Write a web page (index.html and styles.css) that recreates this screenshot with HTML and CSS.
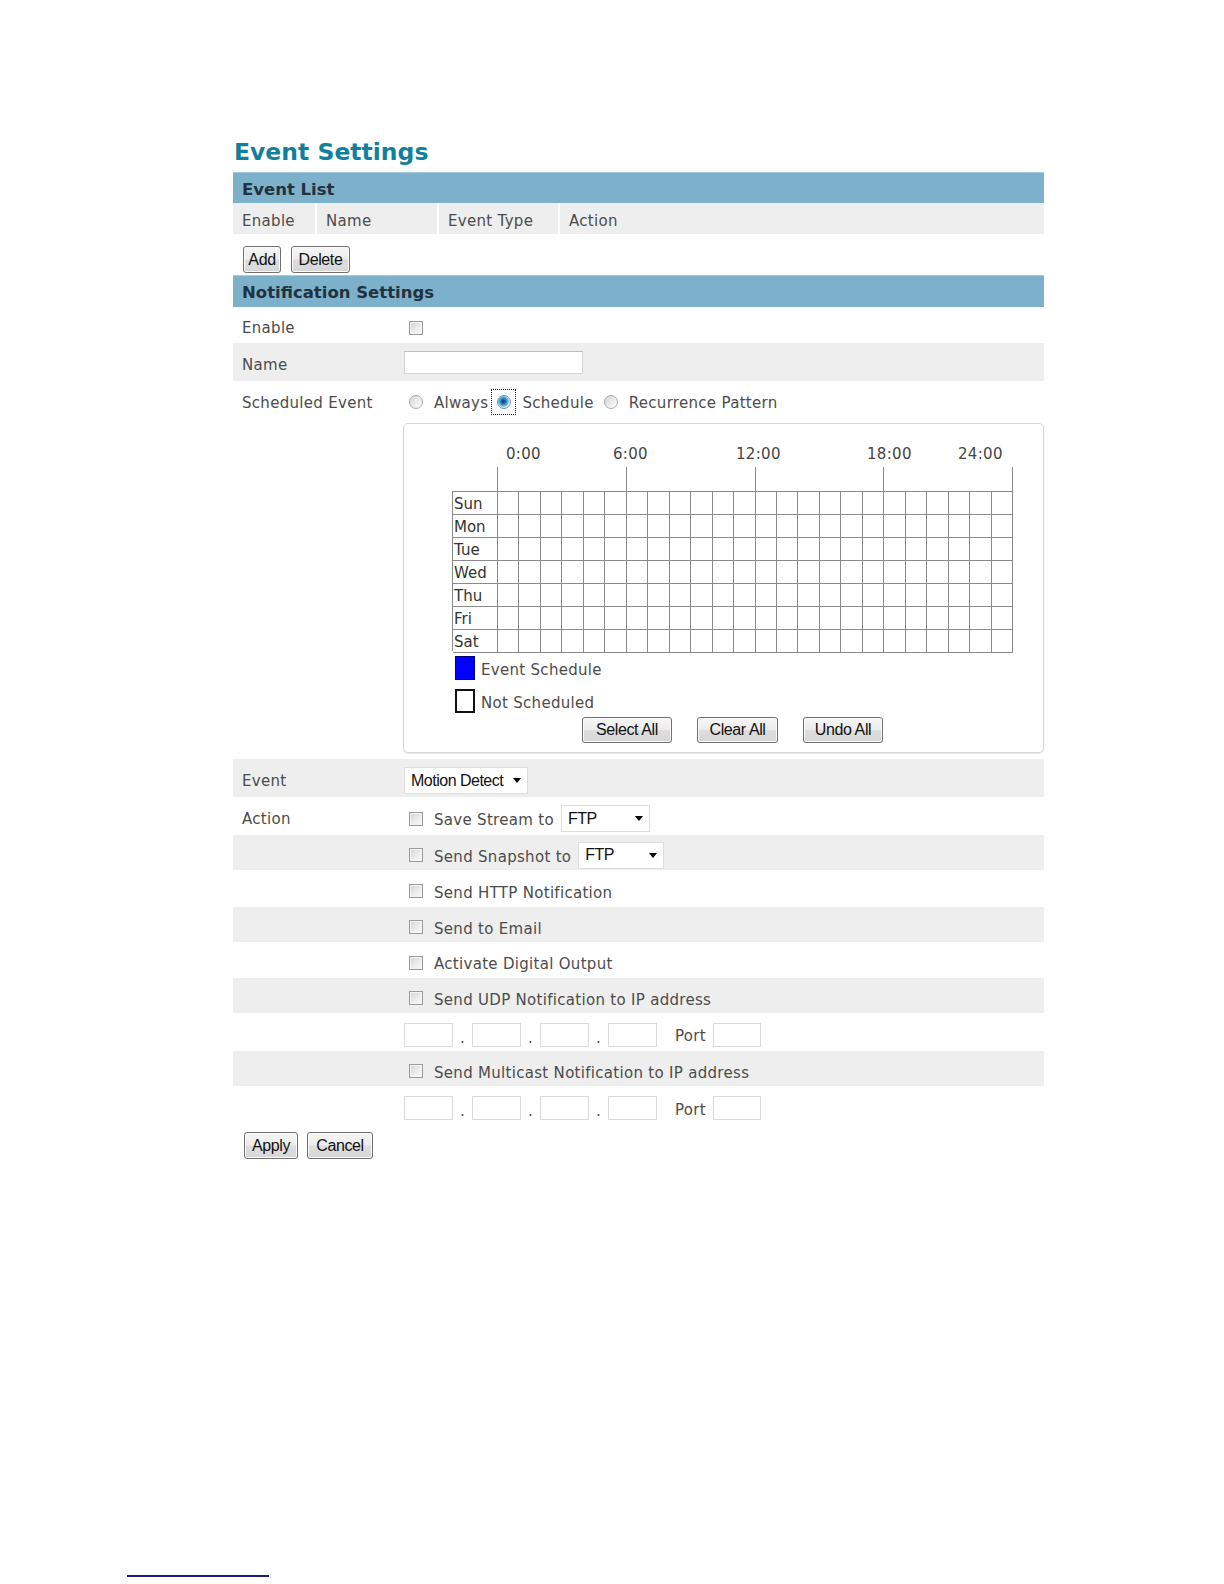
FILE: index.html
```html
<!DOCTYPE html>
<html lang="en">
<head>
<meta charset="utf-8">
<title>Event Settings</title>
<link rel="stylesheet" href="styles.css">
</head>
<body>
<div class="sheet">
  <div class="panel">
    <h1 class="title">Event Settings</h1>

    <div class="sec-head">Event List</div>
    <div class="list-head">
      <div class="lh lh-enable">Enable</div>
      <div class="lh lh-name">Name</div>
      <div class="lh lh-type">Event Type</div>
      <div class="lh lh-action">Action</div>
    </div>
    <div class="list-btns">
      <button class="btn btn-add">Add</button>
      <button class="btn btn-delete">Delete</button>
    </div>

    <div class="sec-head sec-head-notif">Notification Settings</div>

    <div class="row h36">
      <div class="label">Enable</div>
      <div class="value"><input type="checkbox" class="cb"></div>
    </div>

    <div class="row alt h38">
      <div class="label">Name</div>
      <div class="value"><input type="text" class="text-input"></div>
    </div>

    <div class="row row-sched">
      <div class="label label-sched">Scheduled Event</div>
      <div class="value">
        <div class="radios">
          <input type="radio" name="sched" class="rb rb-first">
          <span class="rb-text">Always</span>
          <span class="focus-box"><input type="radio" name="sched" class="rb" checked></span>
          <span class="rb-text rb-text-sched">Schedule</span>
          <input type="radio" name="sched" class="rb rb-third">
          <span class="rb-text">Recurrence Pattern</span>
        </div>
        <div class="sched-box">
          <div class="scale-labels">
            <span class="tl tl-0">0:00</span>
            <span class="tl tl-6">6:00</span>
            <span class="tl tl-12">12:00</span>
            <span class="tl tl-18">18:00</span>
            <span class="tl tl-24">24:00</span>
          </div>
          <div class="ticks"><span></span><span></span><span></span><span></span><span></span></div>
          <div class="sched-grid">
            <span class="day">Sun</span><span></span><span></span><span></span><span></span><span></span><span></span><span></span><span></span><span></span><span></span><span></span><span></span><span></span><span></span><span></span><span></span><span></span><span></span><span></span><span></span><span></span><span></span><span></span><span></span>
            <span class="day">Mon</span><span></span><span></span><span></span><span></span><span></span><span></span><span></span><span></span><span></span><span></span><span></span><span></span><span></span><span></span><span></span><span></span><span></span><span></span><span></span><span></span><span></span><span></span><span></span><span></span>
            <span class="day">Tue</span><span></span><span></span><span></span><span></span><span></span><span></span><span></span><span></span><span></span><span></span><span></span><span></span><span></span><span></span><span></span><span></span><span></span><span></span><span></span><span></span><span></span><span></span><span></span><span></span>
            <span class="day">Wed</span><span></span><span></span><span></span><span></span><span></span><span></span><span></span><span></span><span></span><span></span><span></span><span></span><span></span><span></span><span></span><span></span><span></span><span></span><span></span><span></span><span></span><span></span><span></span><span></span>
            <span class="day">Thu</span><span></span><span></span><span></span><span></span><span></span><span></span><span></span><span></span><span></span><span></span><span></span><span></span><span></span><span></span><span></span><span></span><span></span><span></span><span></span><span></span><span></span><span></span><span></span><span></span>
            <span class="day">Fri</span><span></span><span></span><span></span><span></span><span></span><span></span><span></span><span></span><span></span><span></span><span></span><span></span><span></span><span></span><span></span><span></span><span></span><span></span><span></span><span></span><span></span><span></span><span></span><span></span>
            <span class="day">Sat</span><span></span><span></span><span></span><span></span><span></span><span></span><span></span><span></span><span></span><span></span><span></span><span></span><span></span><span></span><span></span><span></span><span></span><span></span><span></span><span></span><span></span><span></span><span></span><span></span>
          </div>
          <div class="legend">
            <div class="leg-item"><span class="swatch sw-on"></span><span class="leg-text">Event Schedule</span></div>
            <div class="leg-item"><span class="swatch sw-off"></span><span class="leg-text">Not Scheduled</span></div>
          </div>
          <div class="sched-btns">
            <button class="btn btn-select">Select All</button>
            <button class="btn btn-clear">Clear All</button>
            <button class="btn btn-undo">Undo All</button>
          </div>
        </div>
      </div>
    </div>

    <div class="row alt h38">
      <div class="label">Event</div>
      <div class="value">
        <div class="select sel-event"><span>Motion Detect</span><span class="arrow"></span></div>
      </div>
    </div>

    <div class="row h38">
      <div class="label">Action</div>
      <div class="value chk-line">
        <input type="checkbox" class="cb"><span class="chk-text">Save Stream to</span>
        <div class="select sel-ftp"><span>FTP</span><span class="arrow"></span></div>
      </div>
    </div>

    <div class="row alt h35">
      <div class="label"></div>
      <div class="value chk-line">
        <input type="checkbox" class="cb"><span class="chk-text">Send Snapshot to</span>
        <div class="select sel-ftp2"><span>FTP</span><span class="arrow"></span></div>
      </div>
    </div>

    <div class="row h37">
      <div class="label"></div>
      <div class="value chk-line"><input type="checkbox" class="cb"><span class="chk-text">Send HTTP Notification</span></div>
    </div>

    <div class="row alt h35">
      <div class="label"></div>
      <div class="value chk-line"><input type="checkbox" class="cb"><span class="chk-text">Send to Email</span></div>
    </div>

    <div class="row h36">
      <div class="label"></div>
      <div class="value chk-line"><input type="checkbox" class="cb"><span class="chk-text">Activate Digital Output</span></div>
    </div>

    <div class="row alt h35">
      <div class="label"></div>
      <div class="value chk-line"><input type="checkbox" class="cb"><span class="chk-text">Send UDP Notification to IP address</span></div>
    </div>

    <div class="row h38">
      <div class="label"></div>
      <div class="value ip-line">
        <input type="text" class="ip ip-first"><span class="dot">.</span><input type="text" class="ip"><span class="dot">.</span><input type="text" class="ip"><span class="dot">.</span><input type="text" class="ip">
        <span class="port">Port</span><input type="text" class="ip ip-port">
      </div>
    </div>

    <div class="row alt h35">
      <div class="label"></div>
      <div class="value chk-line"><input type="checkbox" class="cb"><span class="chk-text">Send Multicast Notification to IP address</span></div>
    </div>

    <div class="row h39">
      <div class="label"></div>
      <div class="value ip-line">
        <input type="text" class="ip ip-first"><span class="dot">.</span><input type="text" class="ip"><span class="dot">.</span><input type="text" class="ip"><span class="dot">.</span><input type="text" class="ip">
        <span class="port">Port</span><input type="text" class="ip ip-port">
      </div>
    </div>

    <div class="form-btns">
      <button class="btn btn-apply">Apply</button>
      <button class="btn btn-cancel">Cancel</button>
    </div>
  </div>
</div>
<div class="foot-rule"></div>
</body>
</html>
```

FILE: styles.css
```css
* {
  box-sizing: border-box;
}

body {
  margin: 0;
  background: #ffffff;
  font-family: "DejaVu Sans", Verdana, sans-serif;
  font-size: 15px;
  color: #4c4c4c;
  letter-spacing: 0.3px;
}

.sheet {
  height: 1575px;
  padding: 137px 0 0 233px;
}

.panel {
  width: 811px;
}

.title {
  margin: 0 0 5px 1px;
  height: 30px;
  line-height: 30px;
  font-size: 23.5px;
  font-weight: bold;
  color: #11809f;
  letter-spacing: 0;
}

.sec-head {
  height: 31px;
  line-height: 26px;
  padding-top: 4px;
  background: #7db1cb;
  border-top: 1px solid #a6cbdd;
  padding-left: 9px;
  font-size: 16.5px;
  font-weight: bold;
  color: #22323c;
  letter-spacing: 0;
}

.sec-head-notif {
  height: 32px;
}

/* event list */
.list-head {
  display: flex;
  gap: 2px;
  height: 31px;
}

.lh {
  background: #eeeeee;
  line-height: 26px;
  padding: 5px 0 0 9px;
}

.lh-enable { width: 82px; }
.lh-name { width: 120px; }
.lh-type { width: 119px; }
.lh-action { flex: 1; }

.list-btns {
  display: flex;
  gap: 10px;
  height: 41px;
  padding: 12px 0 0 10px;
}

/* buttons */
.btn {
  height: 27px;
  padding: 0;
  border: 1px solid #707070;
  border-radius: 3px;
  background: linear-gradient(#f6f6f6 0%, #ececec 48%, #dedede 52%, #d6d6d6 100%);
  box-shadow: inset 0 0 0 1px #fbfbfb;
  font-family: "Liberation Sans", Arial, sans-serif;
  font-size: 16px;
  color: #111111;
  letter-spacing: -0.4px;
}

.btn-add { width: 38px; }
.btn-delete { width: 59px; }
.btn-select { width: 90px; height: 26px; }
.btn-clear { width: 81px; height: 26px; }
.btn-undo { width: 80px; height: 26px; }
.btn-apply { width: 54px; }
.btn-cancel { width: 66px; }

/* form rows */
.row {
  display: grid;
  grid-template-columns: 170px 1fr;
  align-items: center;
  padding-top: 5px;
}

.row.alt {
  background: #eeeeee;
}

.h35 { height: 35px; }
.h36 { height: 36px; }
.h37 { height: 37px; }
.h38 { height: 38px; }
.h39 { height: 39px; }

.label {
  padding-left: 9px;
}

.value {
  min-width: 0;
}

.cb {
  appearance: none;
  -webkit-appearance: none;
  display: block;
  margin: 0 0 0 6px;
  width: 14px;
  height: 14px;
  border: 1px solid #9a9a9a;
  background: linear-gradient(135deg, #d2d2d2 0%, #ececec 55%, #fafafa 100%);
  box-shadow: inset 0 0 0 1px #f4f4f4;
  flex: none;
}

.text-input {
  display: block;
  margin: -4px 0 0 1px;
  width: 179px;
  height: 23px;
  border: 1px solid #d4d4d4;
  border-top-color: #bdbdbd;
  background: #ffffff;
  padding: 0;
}

/* scheduled event */
.row-sched {
  align-items: start;
  padding-top: 0;
}

.label-sched {
  line-height: 42px;
  padding-top: 1px;
}

.radios {
  display: flex;
  align-items: center;
  height: 42px;
}

.rb {
  appearance: none;
  -webkit-appearance: none;
  display: block;
  margin: 0;
  width: 14px;
  height: 14px;
  border-radius: 50%;
  border: 1px solid #a9a9a9;
  background: linear-gradient(135deg, #d4d4d4 0%, #efefef 60%, #ffffff 100%);
  flex: none;
}

.rb:checked {
  border-color: #7f93a3;
  background: radial-gradient(circle at 45% 45%, #0b3f6e 0, #1b64a3 2px, #3c9ad8 3.5px, #6fbdea 5px, #dfe8ee 5.6px, #f4f4f4 100%);
}

.rb-first {
  margin-left: 6px;
}

.rb-third {
  margin-left: 10px;
}

.rb-text {
  margin-left: 11px;
  padding-top: 2px;
}

.focus-box {
  display: flex;
  align-items: center;
  justify-content: center;
  margin-left: 3px;
  width: 25px;
  height: 26px;
  border: 1px dotted #222222;
}

.rb-text-sched {
  margin-left: 6px;
}

.sched-box {
  margin: 0 0 6px 0;
  width: 641px;
  height: 330px;
  border: 1px solid #d6d6d6;
  border-radius: 5px;
  box-shadow: 0 1px 1px #e6e6e6;
  padding-left: 48px;
}

.scale-labels {
  position: relative;
  height: 43px;
  width: 561px;
}

.tl {
  position: absolute;
  top: 20px;
  line-height: 20px;
  color: #444444;
}

.tl-0 { left: 54px; }
.tl-6 { left: 161px; }
.tl-12 { left: 284px; }
.tl-18 { left: 415px; }
.tl-24 { left: 506px; }

.ticks {
  display: grid;
  grid-template-columns: 45px repeat(4, 1fr);
  width: 561px;
  height: 24px;
  padding-left: 1px;
}

.ticks span {
  border-right: 1px solid #8a8a8a;
}

.sched-grid {
  display: grid;
  grid-template-columns: 45px repeat(24, 1fr);
  grid-template-rows: repeat(7, 1fr);
  width: 561px;
  height: 160px;
  border-left: 1px solid #8a8a8a;
  border-top: 1px solid #8a8a8a;
}

.sched-grid span {
  border-right: 1px solid #8a8a8a;
  border-bottom: 1px solid #8a8a8a;
}

.sched-grid .day {
  padding: 2px 0 0 1px;
  line-height: 20px;
  color: #333333;
  letter-spacing: 0;
}

.legend {
  margin: 5px 0 0 3px;
}

.leg-item {
  display: flex;
  align-items: center;
  height: 24px;
}

.leg-item + .leg-item {
  margin-top: 9px;
}

.leg-text {
  padding-top: 3px;
}

.swatch {
  width: 20px;
  height: 24px;
  margin-right: 6px;
}

.sw-on {
  background: #0000ff;
  border: 1px solid #00007a;
}

.sw-off {
  background: #ffffff;
  border: 2px solid #111111;
}

.sched-btns {
  display: flex;
  justify-content: center;
  gap: 25px;
  width: 561px;
  margin-top: 4px;
}

/* selects */
.select {
  display: flex;
  align-items: center;
  justify-content: space-between;
  height: 27px;
  background: #ffffff;
  border: 1px solid #dedede;
  padding: 0 6px 0 6px;
  font-family: "Liberation Sans", Arial, sans-serif;
  font-size: 16px;
  color: #111111;
  letter-spacing: -0.5px;
}

.sel-event {
  margin-left: 1px;
  width: 124px;
  height: 27px;
}

.sel-ftp {
  margin-left: 7px;
  width: 89px;
}

.sel-ftp2 {
  margin-left: 7px;
  width: 86px;
  height: 27px;
}

.arrow {
  width: 0;
  height: 0;
  border-left: 4.5px solid transparent;
  border-right: 4.5px solid transparent;
  border-top: 5px solid #000000;
}

.chk-line {
  display: flex;
  align-items: center;
}

.chk-text {
  margin-left: 11px;
  padding-top: 3px;
}

/* ip */
.ip-line {
  display: flex;
  align-items: center;
}

.ip {
  display: block;
  margin: 0;
  width: 49px;
  height: 24px;
  border: 1px solid #dadada;
  background: #ffffff;
  padding: 0;
}

.ip-first {
  margin-left: 1px;
}

.ip-port {
  width: 48px;
}

.dot {
  width: 19px;
  text-align: center;
  padding-top: 6px;
}

.port {
  margin: 0 7px 0 18px;
  padding-top: 3px;
}

.form-btns {
  display: flex;
  gap: 9px;
  padding: 7px 0 0 11px;
}

.foot-rule {
  margin-left: 127px;
  width: 142px;
  height: 2px;
  background: #1a1a88;
}
```
